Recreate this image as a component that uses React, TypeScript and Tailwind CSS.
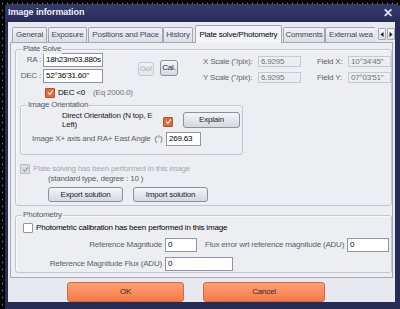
import React from "react";

const font = "font-['Liberation_Sans',Arial,sans-serif]";

function Field({ value, className = "", disabled = false }: { value: string; className?: string; disabled?: boolean }) {
  return (
    <div
      className={`flex items-center pl-[2px] whitespace-nowrap overflow-hidden ${
        disabled ? "bg-[#eceef1] border border-[#c6cad1] text-[#6e737c]" : "bg-white border border-[#8f96a3] text-black"
      } ${className}`}
    >
      {value}
    </div>
  );
}

function Btn({ label, className = "", disabled = false }: { label: string; className?: string; disabled?: boolean }) {
  return (
    <div
      className={`flex items-center justify-center rounded-[3px] border bg-gradient-to-b ${
        disabled
          ? "border-[#c3c7cf] from-[#f1f2f5] to-[#e2e5ea] text-[#a7abb3]"
          : "border-[#8a91a0] from-[#f4f5f8] to-[#d4d8e0] text-[#1c1f26]"
      } ${className}`}
    >
      {label}
    </div>
  );
}

function Check({ state }: { state: "on" | "off" | "dim" }) {
  if (state === "off") return <div className="w-[10px] h-[10px] shrink-0 bg-white border border-[#8f96a3] rounded-[1px]" />;
  const dim = state === "dim";
  return (
    <div
      className={`w-[10px] h-[10px] shrink-0 rounded-[1px] border flex items-center justify-center ${
        dim ? "bg-[#d9dde5] border-[#b8bdc8]" : "bg-[#e5693a] border-[#b3532c]"
      }`}
    >
      <svg width="7" height="7" viewBox="0 0 8 8">
        <path d="M1.2 4.2 L3.2 6.2 L6.8 1.6" fill="none" stroke={dim ? "#8e98ad" : "#fff4ec"} strokeWidth="1.4" />
      </svg>
    </div>
  );
}

function Group({ title, className = "", children }: { title: string; className?: string; children: React.ReactNode }) {
  return (
    <div className={`relative border border-[#c3c8d0] rounded-[3px] shadow-[inset_1px_1px_0_#f8f9fb] ${className}`}>
      <span className="absolute left-[6px] -top-[6px] px-[1px] leading-[10px] bg-[#eceef2] text-[#565b66]">{title}</span>
      {children}
    </div>
  );
}

const tabs = [
  { name: "General", w: "w-[35px]", ml: "ml-0" },
  { name: "Exposure", w: "w-[39px]", ml: "ml-[1px]" },
  { name: "Positions and Place", w: "w-[75px]", ml: "ml-[1px]" },
  { name: "History", w: "w-[30px]", ml: "ml-0" },
];

export default function App() {
  return (
    <div
      className={`w-[400px] h-[309px] overflow-hidden bg-[#050505] bg-[radial-gradient(#7a7a7a_0.5px,transparent_0.8px)] bg-[length:5px_7px] text-[8px] tracking-[-0.2px] ${font}`}
    >
      <div className="ml-[5px] mt-[4px] w-[395px] h-[305px] bg-[#272c57] rounded-t-[4px] flex flex-col">
        {/* title bar */}
        <div className="h-[18px] flex items-center pl-[3px] pr-[7px] bg-gradient-to-b from-[#353b6c] to-[#272c57] rounded-t-[4px]">
          <span className="text-[9px] font-bold text-[#eef0f8] tracking-[-0.1px]">Image information</span>
          <span className="ml-auto text-[12px] font-bold text-[#dfe2ee] leading-none">✕</span>
        </div>

        {/* client */}
        <div className="ml-[3px] mr-[5px] h-[280px] bg-[#e7e9ee] flex flex-col">
          {/* tabs */}
          <div className="h-[20px] flex items-end pl-[4px]">
            {tabs.map((t) => (
              <div
                key={t.name}
                className={`${t.w} ${t.ml} h-[15px] flex items-center justify-center whitespace-nowrap border border-b-0 border-[#a0a7b4] rounded-t-[2px] bg-gradient-to-b from-[#f2f3f6] to-[#d9dde5] text-[#444958]`}
              >
                {t.name}
              </div>
            ))}
            <div className="w-[87px] ml-[2px] h-[18px] mb-[-1px] relative z-10 flex items-center justify-center whitespace-nowrap border border-b-0 border-[#a0a7b4] rounded-t-[2px] bg-[#f4f5f8] text-black">
              Plate solve/Photometry
            </div>
            <div className="w-[42px] ml-[1px] h-[15px] flex items-center justify-center whitespace-nowrap border border-b-0 border-[#a0a7b4] rounded-t-[2px] bg-gradient-to-b from-[#f2f3f6] to-[#d9dde5] text-[#444958]">
              Comments
            </div>
            <div className="w-[50px] h-[15px] flex items-center pl-[3px] whitespace-nowrap border border-b-0 border-r-0 border-[#a0a7b4] rounded-tl-[2px] bg-gradient-to-b from-[#f2f3f6] to-[#d9dde5] text-[#444958]">
              External wea
            </div>
            <div className="ml-[3px] mb-[2px] w-[8px] h-[12px] flex items-center justify-center border border-[#a0a7b4] rounded-[1px] bg-gradient-to-b from-[#f7f8fa] to-[#dde1e8]">
              <svg width="4" height="5" viewBox="0 0 4 5">
                <path d="M3.5 0 L0.5 2.5 L3.5 5 Z" fill="#111" />
              </svg>
            </div>
            <div className="ml-[1px] mb-[2px] w-[8px] h-[12px] flex items-center justify-center border border-[#a0a7b4] rounded-[1px] bg-gradient-to-b from-[#f7f8fa] to-[#dde1e8]">
              <svg width="4" height="5" viewBox="0 0 4 5">
                <path d="M0.5 0 L3.5 2.5 L0.5 5 Z" fill="#111" />
              </svg>
            </div>
          </div>

          {/* tab pane */}
          <div className="ml-[2px] w-[383px] h-[236px] border border-[#a3a9b5] bg-[#eceef2] flex flex-col">
            <Group title="Plate Solve" className="ml-[4px] mt-[6px] w-[377px] h-[157px] flex flex-col">
              <div className="flex items-start">
                <div className="flex flex-col">
                  <div className="mt-[3px] h-[14px] flex items-center">
                    <span className="w-[27px] text-right pr-[2px] text-[#5a5f69]">RA :</span>
                    <Field value="18h23m03.880s" className="w-[60px] h-[14px]" />
                  </div>
                  <div className="mt-[2px] h-[14px] flex items-center">
                    <span className="w-[27px] text-right pr-[2px] text-[#5a5f69]">DEC :</span>
                    <Field value={"52°36'31.60\""} className="w-[60px] h-[14px]" />
                  </div>
                  <div className="mt-[4px] h-[11px] flex items-center pl-[29px] whitespace-nowrap">
                    <Check state="on" />
                    <span className="ml-[3px] text-black">DEC &lt;0</span>
                    <span className="ml-[8px] text-[#6e737c]">(Eq 2000.0)</span>
                  </div>
                </div>
                <Btn label="Go!" disabled className="ml-[5px] mt-[12px] w-[29px] h-[14px]" />
                <Btn label="Cal." className="ml-[6px] mt-[10px] w-[32px] h-[16px]" />
                <div className="ml-[25px] flex flex-col text-[#5f646e] whitespace-nowrap">
                  <div className="mt-[6px] h-[11px] flex items-center">
                    <span className="w-[55px]">X Scale ("/pix):</span>
                    <Field value="6.9295" disabled className="w-[43px] h-[11px]" />
                  </div>
                  <div className="mt-[5px] h-[11px] flex items-center">
                    <span className="w-[55px]">Y Scale ("/pix):</span>
                    <Field value="6.9295" disabled className="w-[43px] h-[11px]" />
                  </div>
                </div>
                <div className="ml-[16px] flex flex-col text-[#5f646e] whitespace-nowrap">
                  <div className="mt-[6px] h-[11px] flex items-center">
                    <span className="w-[31px]">Field X:</span>
                    <Field value={"10°34'45\""} disabled className="w-[43px] h-[11px]" />
                  </div>
                  <div className="mt-[5px] h-[11px] flex items-center">
                    <span className="w-[31px]">Field Y:</span>
                    <Field value={"07°03'51\""} disabled className="w-[43px] h-[11px]" />
                  </div>
                </div>
              </div>

              <Group title="Image Orientation" className="ml-[4px] mt-[7px] w-[223px] h-[50px] shrink-0 flex flex-col">
                <div className="mt-[5px] h-[18px] flex items-center">
                  <span className="ml-[41px] w-[96px] leading-[9px] text-[#1e2128]">Direct Orientation (N top, E Left)</span>
                  <div className="ml-[5px] mt-[3px]">
                    <Check state="on" />
                  </div>
                  <Btn label="Explain" className="ml-[10px] w-[57px] h-[16px]" />
                </div>
                <div className="mt-[3px] h-[14px] flex items-center">
                  <span className="ml-[11px] w-[133px] whitespace-nowrap text-[#5a5f69]">Image X+ axis and RA+ East Angle&nbsp;&nbsp;(°)</span>
                  <Field value="269.63" className="ml-[1px] w-[35px] h-[14px]" />
                </div>
              </Group>

              <div className="mt-[9px] h-[10px] flex items-center pl-[4px] whitespace-nowrap">
                <Check state="dim" />
                <span className="ml-[3px] text-[#a5a9b2]">Plate solving has been performed in this image</span>
              </div>
              <div className="h-[9px] leading-[9px] pl-[32px] text-[#5a5f69]">(standard type, degree : 10 )</div>
              <div className="mt-[4px] flex pl-[32px]">
                <Btn label="Export solution" className="w-[75px] h-[15px]" />
                <Btn label="Import solution" className="ml-[10px] w-[75px] h-[15px]" />
              </div>
            </Group>

            <Group title="Photometry" className="ml-[4px] mt-[9px] w-[377px] h-[58px] flex flex-col">
              <div className="mt-[7px] h-[10px] flex items-center pl-[7px] whitespace-nowrap">
                <Check state="off" />
                <span className="ml-[3px] text-black">Photometric calibration has been performed in this image</span>
              </div>
              <div className="mt-[5px] h-[14px] flex items-center whitespace-nowrap text-[#5a5f69]">
                <span className="w-[149px] text-right pr-[3px]">Reference Magnitude</span>
                <Field value="0" className="w-[32px] h-[14px]" />
                <span className="ml-[8px] w-[139px]">Flux error wrt reference magnitude (ADU)</span>
                <Field value="0" className="ml-[3px] w-[42px] h-[14px]" />
              </div>
              <div className="mt-[5px] h-[14px] flex items-center whitespace-nowrap text-[#5a5f69]">
                <span className="w-[149px] text-right pr-[3px]">Reference Magnitude Flux (ADU)</span>
                <Field value="0" className="w-[68px] h-[14px]" />
              </div>
            </Group>
          </div>

          {/* OK / Cancel */}
          <div className="mt-[4px] flex">
            <div className="ml-[59px] w-[117px] h-[20px] flex items-center justify-center rounded-[3px] border border-[#d9683a] bg-gradient-to-b from-[#fca077] to-[#f67a46] text-[#3b261b]">
              OK
            </div>
            <div className="ml-[19px] w-[122px] h-[20px] flex items-center justify-center rounded-[3px] border border-[#d9683a] bg-gradient-to-b from-[#fca077] to-[#f67a46] text-[#3b261b]">
              Cancel
            </div>
          </div>
        </div>
      </div>
    </div>
  );
}
